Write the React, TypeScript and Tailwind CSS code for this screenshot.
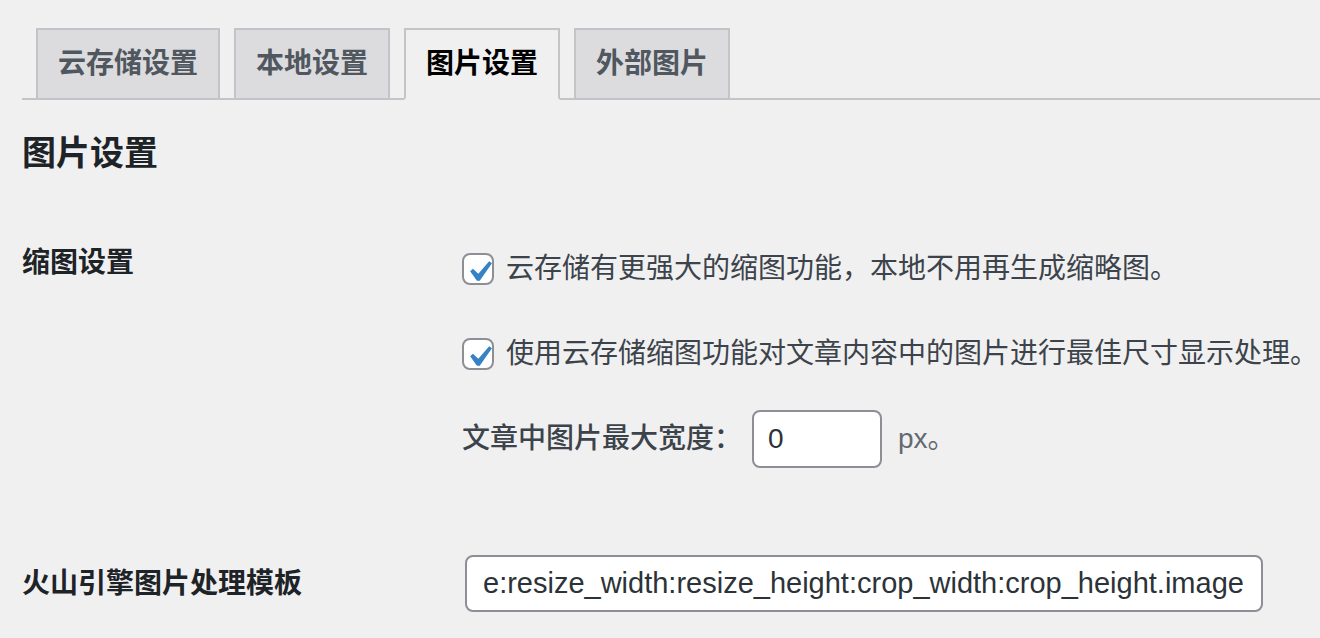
import React from "react";

const font = "font-['Liberation_Sans','Noto_Sans_CJK_SC',sans-serif]";

const tabs = ["云存储设置", "本地设置", "图片设置", "外部图片"];

const Checkbox = () => (
  <span className="relative inline-block size-[32px] shrink-0 rounded-[8px] border-2 border-[#8c8f94] bg-white">
    <svg
      viewBox="0 0 20 20"
      className="absolute left-[-6px] top-[-4px] size-[42px]"
    >
      <path
        d="M14.83 4.89l1.34.94-5.81 8.38H9.02L5.78 9.67l1.34-1.25 2.57 2.4z"
        fill="#3582c4"
      />
    </svg>
  </span>
);

const App = () => {
  const active = "图片设置";

  return (
    <div
      className={`${font} h-[638px] w-[1320px] overflow-hidden bg-[#f0f0f1] pl-[22px] text-[#3c434a]`}
    >
      {/* tabs */}
      <div className="mt-[28px] flex items-end gap-[14px] border-b-2 border-[#c3c4c7] pl-[14px]">
        {tabs.map((t) => (
          <div
            key={t}
            className={
              t === active
                ? "mb-[-2px] border-2 border-b-[#f0f0f1] border-[#c3c4c7] bg-[#f0f0f1] px-[20px] py-[10px] text-[28px] font-semibold leading-[48px] text-black"
                : "mb-[-2px] border-2 border-[#c3c4c7] bg-[#dcdcde] px-[20px] py-[10px] text-[28px] font-semibold leading-[48px] text-[#50575e]"
            }
          >
            {t}
          </div>
        ))}
      </div>

      <h2 className="mt-[31px] text-[34px] font-semibold leading-[44px] text-[#1d2327]">
        图片设置
      </h2>

      {/* thumbnail settings */}
      <div className="mt-[70px] flex items-start">
        <div className="w-[440px] shrink-0 text-[28px] font-semibold leading-[36px] text-[#1d2327]">
          缩图设置
        </div>
        <div className="flex flex-col pt-[6px] text-[28px] whitespace-nowrap">
          <label className="flex h-[36px] items-center gap-[12px]">
            <Checkbox />
            <span>云存储有更强大的缩图功能，本地不用再生成缩略图。</span>
          </label>
          <label className="mt-[49px] flex h-[36px] items-center gap-[12px]">
            <Checkbox />
            <span>使用云存储缩图功能对文章内容中的图片进行最佳尺寸显示处理。</span>
          </label>
          <div className="mt-[38px] flex items-center">
            <span className="font-medium text-[#3c434a]">
              文章中图片最大宽度：
            </span>
            <input
              readOnly
              value="0"
              className="ml-[10px] h-[58px] w-[130px] rounded-[8px] border-2 border-[#8c8f94] bg-white pl-[14px] text-[28px] text-[#2c3338] outline-none"
            />
            <span className="ml-[16px] text-[#646970]">px。</span>
          </div>
        </div>
      </div>

      {/* volcengine template */}
      <div className="mt-[87px] flex items-center">
        <div className="w-[443px] shrink-0 text-[28px] font-semibold leading-[36px] text-[#1d2327]">
          火山引擎图片处理模板
        </div>
        <input
          readOnly
          value="e:resize_width:resize_height:crop_width:crop_height.image"
          className="h-[57px] w-[798px] rounded-[8px] border-2 border-[#8c8f94] bg-white pl-[16px] text-[29px] text-[#2c3338] outline-none"
        />
      </div>
    </div>
  );
};

export default App;
